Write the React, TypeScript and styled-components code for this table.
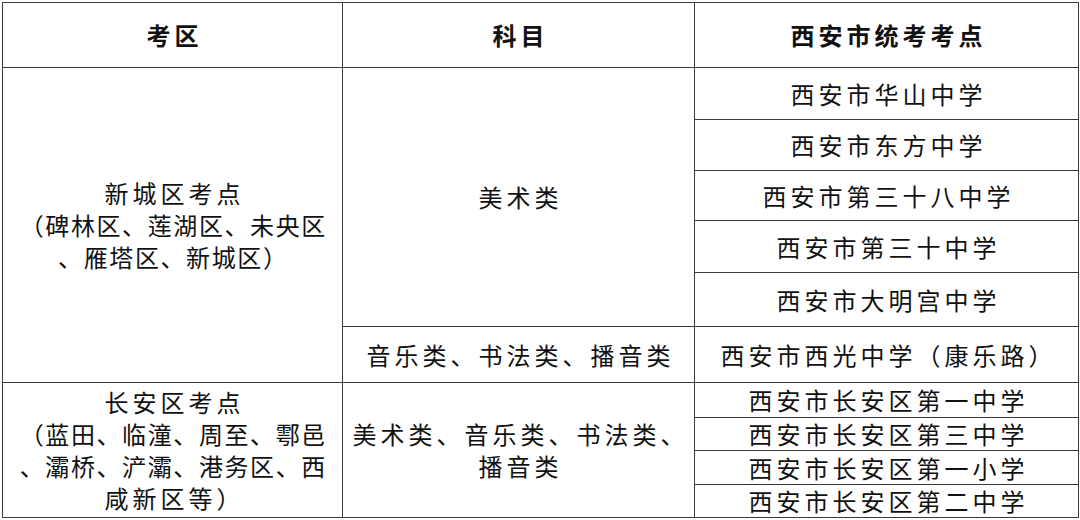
import React from 'react';
import styled, { createGlobalStyle } from 'styled-components';

const GlobalStyle = createGlobalStyle`
  html, body {
    margin: 0;
    padding: 0;
    background: #ffffff;
  }
  body {
    font-family: "Noto Sans CJK SC", "Noto Sans", sans-serif;
    color: #111;
  }
`;

const Page = styled.div`
  width: 1080px;
  height: 520px;
  padding: 2px 0 0 2px;
  box-sizing: border-box;
  background: #fff;
`;

const Table = styled.table`
  border-collapse: collapse;
  table-layout: fixed;
  width: 1076px;
  border: 1px solid #333;
`;

const Cell = styled.td<{ h?: number; bold?: boolean; tight?: boolean }>`
  border: 1px solid #3a3a3a;
  padding: 0;
  height: ${({ h }) => (h ? `${h - 1}px` : 'auto')};
  text-align: center;
  vertical-align: middle;
  font-size: 24px;
  letter-spacing: 4px;
  text-indent: 4px;
  line-height: ${({ tight }) => (tight ? '30px' : '32px')};
  font-weight: ${({ bold }) => (bold ? 700 : 400)};
  white-space: nowrap;
  overflow: hidden;
`;

const HeadCell = styled(Cell).attrs({ as: 'th' })``;

// long district lines are set tighter in the source table
const Note = styled.div<{ narrow?: boolean }>`
  line-height: 32px;
  letter-spacing: ${({ narrow }) => (narrow ? '1.6px' : '4px')};
  text-indent: ${({ narrow }) => (narrow ? '1.6px' : '4px')};
`;

const xinchengSchools = [
  { name: '西安市华山中学', h: 52 },
  { name: '西安市东方中学', h: 51 },
  { name: '西安市第三十八中学', h: 50 },
  { name: '西安市第三十中学', h: 52 },
  { name: '西安市大明宫中学', h: 54 },
];

const changanSchools = [
  { name: '西安市长安区第一中学', h: 35 },
  { name: '西安市长安区第三中学', h: 33 },
  { name: '西安市长安区第一小学', h: 34 },
  { name: '西安市长安区第二中学', h: 33 },
];

export default function App() {
  return (
    <>
      <GlobalStyle />
      <Page>
        <Table>
          <colgroup>
            <col style={{ width: 340 }} />
            <col style={{ width: 352 }} />
            <col style={{ width: 384 }} />
          </colgroup>
          <thead>
            <tr>
              <HeadCell bold h={65}>考区</HeadCell>
              <HeadCell bold h={65}>科目</HeadCell>
              <HeadCell bold h={65}>西安市统考考点</HeadCell>
            </tr>
          </thead>
          <tbody>
            {xinchengSchools.map((s, i) => (
              <tr key={s.name}>
                {i === 0 && (
                  <>
                    <Cell rowSpan={6}>
                      <Note>新城区考点</Note>
                      <Note narrow>（碑林区、莲湖区、未央区</Note>
                      <Note narrow>、雁塔区、新城区）</Note>
                    </Cell>
                    <Cell rowSpan={5}>美术类</Cell>
                  </>
                )}
                <Cell h={s.h}>{s.name}</Cell>
              </tr>
            ))}
            <tr>
              <Cell h={56}>音乐类、书法类、播音类</Cell>
              <Cell h={56}>西安市西光中学（康乐路）</Cell>
            </tr>
            {changanSchools.map((s, i) => (
              <tr key={s.name}>
                {i === 0 && (
                  <>
                    <Cell rowSpan={4}>
                      <Note>长安区考点</Note>
                      <Note narrow>（蓝田、临潼、周至、鄠邑</Note>
                      <Note narrow>、灞桥、浐灞、港务区、西</Note>
                      <Note>咸新区等）</Note>
                    </Cell>
                    <Cell rowSpan={4}>
                      <Note>美术类、音乐类、书法类、</Note>
                      <Note>播音类</Note>
                    </Cell>
                  </>
                )}
                <Cell tight h={s.h}>{s.name}</Cell>
              </tr>
            ))}
          </tbody>
        </Table>
      </Page>
    </>
  );
}
